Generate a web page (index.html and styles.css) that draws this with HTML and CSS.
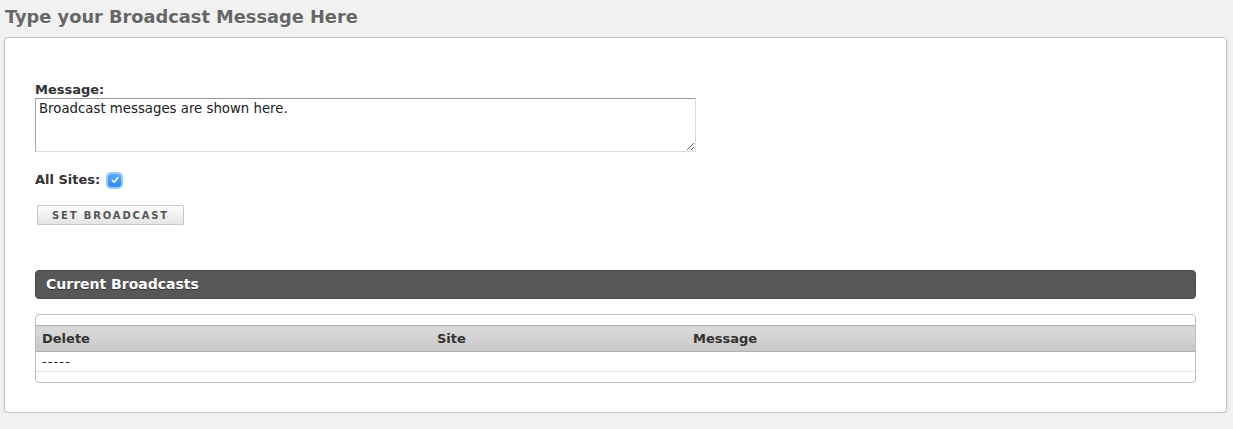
FILE: index.html
```html
<!DOCTYPE html>
<html>
<head>
<meta charset="utf-8">
<link rel="stylesheet" href="styles.css">
</head>
<body>
<h1 class="page-title">Type your Broadcast Message Here</h1>
<div class="panel">
  <div class="field">
    <label class="field-label" for="msg">Message:</label>
    <textarea id="msg" class="msg-input">Broadcast messages are shown here.</textarea>
  </div>
  <div class="check-row">
    <span class="field-label">All Sites:</span>
    <span class="checkbox"><svg width="10" height="10" viewBox="0 0 10 10"><path d="M2.2 5.3 L4.2 7.3 L7.9 2.6" fill="none" stroke="#fff" stroke-width="1.6" stroke-linecap="round" stroke-linejoin="round"/></svg></span>
  </div>
  <button class="btn">SET BROADCAST</button>
  <div class="section-bar">Current Broadcasts</div>
  <div class="table-wrap">
    <table class="grid">
      <thead>
        <tr><th class="c-del">Delete</th><th class="c-site">Site</th><th class="c-msg">Message</th></tr>
      </thead>
      <tbody>
        <tr><td class="dash">-----</td><td></td><td></td></tr>
      </tbody>
    </table>
  </div>
</div>
</body>
</html>
```
FILE: styles.css
```css
html, body {
  margin: 0;
  padding: 0;
  background: #f1f1f1;
}
body {
  font-family: Verdana, "DejaVu Sans", sans-serif;
  color: #333;
  padding: 0 6px 0 4px;
}
.page-title {
  margin: 0;
  padding: 6px 0 0 1px;
  height: 30px;
  box-sizing: border-box;
  font-size: 17.8px;
  font-weight: bold;
  color: #666;
  line-height: 22px;
  text-shadow: 0 1px 0 #fff;
}
.panel {
  margin-top: 7px;
  background: #fff;
  border: 1px solid #c4c4c4;
  border-radius: 4px;
  box-shadow: 0 1px 3px rgba(0,0,0,0.12);
  padding: 44px 30px 30px 30px;
  height: 376px;
  box-sizing: border-box;
}
.field {
  display: flex;
  flex-direction: column;
}
.field-label {
  font-size: 13px;
  font-weight: bold;
  color: #333;
  line-height: 16px;
}
.msg-input {
  margin-top: 0;
  width: 661px;
  height: 54px;
  box-sizing: border-box;
  border: 1px solid #dcdcdc;
  border-top-color: #999;
  border-left-color: #aaa;
  font-family: Verdana, "DejaVu Sans", sans-serif;
  font-size: 13.3px;
  color: #222;
  padding: 2px 3px;
  resize: vertical;
  line-height: 16px;
}
.check-row {
  display: flex;
  align-items: center;
  gap: 8px;
  margin-top: 20px;
  height: 16px;
}
.checkbox {
  width: 13px;
  height: 13px;
  border-radius: 3px;
  background: linear-gradient(#5aa9ff, #2a86f5);
  box-shadow: 0 0 0 2px #9cc8fb;
  display: flex;
  align-items: center;
  justify-content: center;
}
.btn {
  display: block;
  margin: 17px 0 0 2px;
  width: 147px;
  height: 20px;
  border: 1px solid #c8c8c8;
  border-radius: 1px;
  background: linear-gradient(#fdfdfd, #e4e4e4);
  font-family: Verdana, "DejaVu Sans", sans-serif;
  font-size: 10px;
  font-weight: bold;
  letter-spacing: 1.85px;
  color: #555;
  padding: 0;
}
.section-bar {
  margin-top: 45px;
  height: 29px;
  box-sizing: border-box;
  background: #575757;
  border: 1px solid #4a4a4a;
  border-radius: 4px;
  color: #fff;
  font-size: 14px;
  font-weight: bold;
  line-height: 27px;
  padding-left: 10px;
  text-shadow: 0 1px 0 #333;
}
.table-wrap {
  margin-top: 15px;
  border: 1px solid #bdbdbd;
  border-radius: 4px;
  padding: 10px 0 10px 0;
}
.grid {
  width: 100%;
  border-collapse: collapse;
  font-size: 13px;
}
.grid th {
  text-align: left;
  font-weight: bold;
  color: #333;
  height: 25px;
  padding: 0 6px;
  line-height: 16px;
  background: linear-gradient(#dadada, #c8c8c8);
  border-top: 1px solid #b2b2b2;
  border-bottom: 1px solid #b2b2b2;
}
.grid td {
  height: 19px;
  padding: 0 6px;
  border-bottom: 1px solid #e2e2e2;
  color: #222;
  line-height: 14px;
}
.grid td.dash {
  letter-spacing: 1.1px;
}
.c-del { width: 383px; }
.c-site { width: 244px; }
```
